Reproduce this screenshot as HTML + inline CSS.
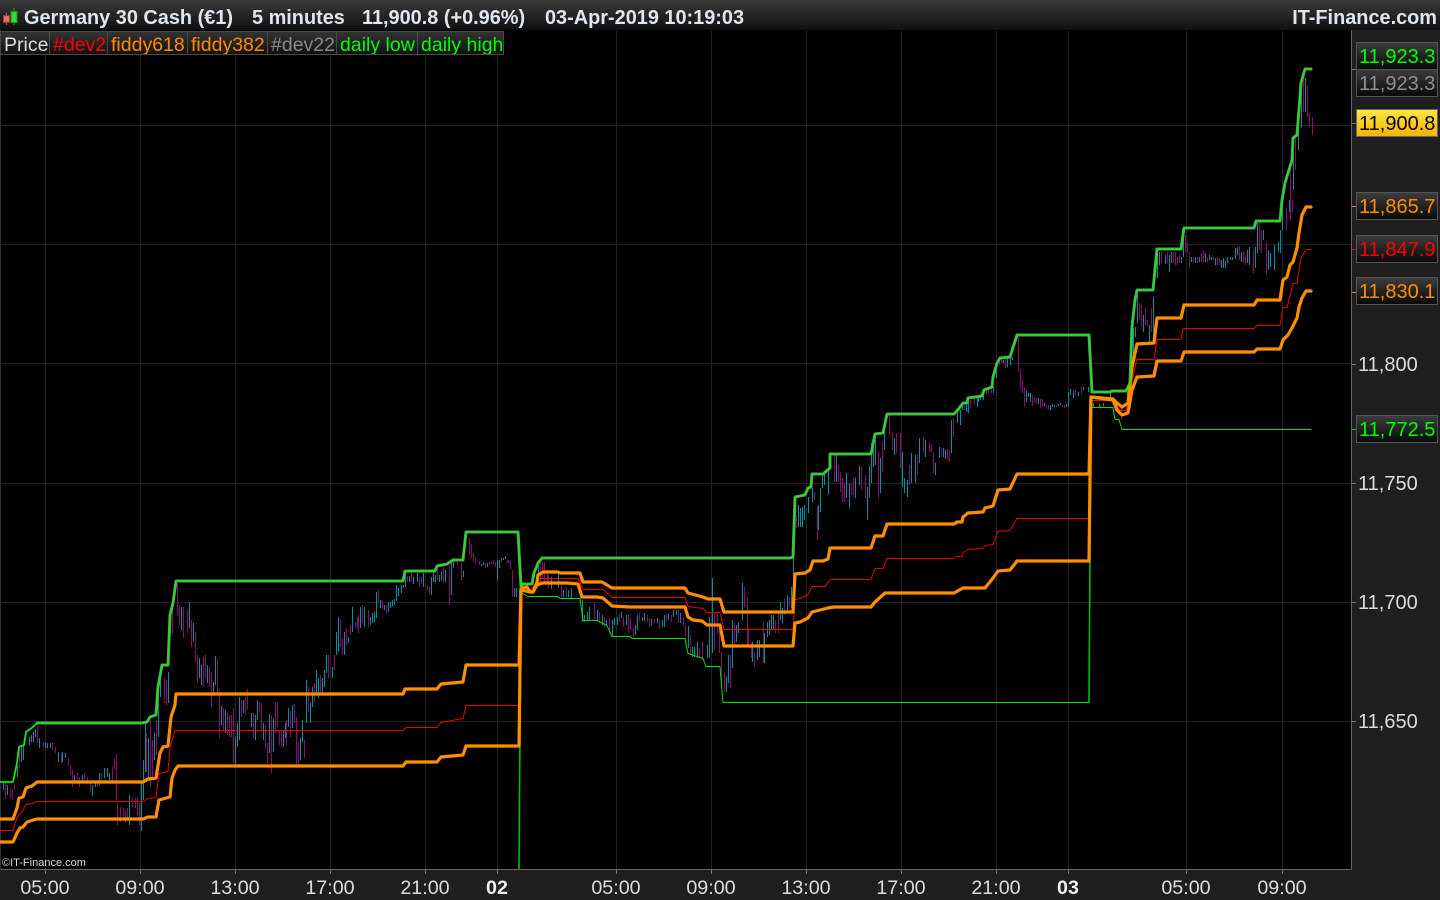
<!DOCTYPE html>
<html><head><meta charset="utf-8"><title>Germany 30 Cash</title>
<style>
html,body{margin:0;padding:0;background:#000;width:1440px;height:900px;overflow:hidden}
body{position:relative;font-family:"Liberation Sans",sans-serif}
.a{position:absolute;white-space:nowrap}
#hd{left:0;top:0;width:1440px;height:30px;background:linear-gradient(#3a3a3a,#101010);}
.h{top:6px;font:bold 19.9px/24px "Liberation Sans",sans-serif;color:#dfe6ee}
.c{top:31px;height:24px;box-sizing:border-box;border:1px solid #4a4a4a;border-left:0;background:linear-gradient(#333,#111);font-size:19.5px;line-height:27px;padding-left:3px;overflow:hidden}
.p{left:1356px;width:82px;height:28px;box-sizing:border-box;border:1.5px solid #555;background:linear-gradient(#3c3c3c,#0a0a0a);font-size:20px;line-height:29px;padding-left:2px}
.t{top:876px;width:70px;text-align:center;color:#dcdcdc;font-size:19.7px;line-height:24px}
.y{left:1358px;color:#dcdcdc;font-size:20px;line-height:26px}
svg{position:absolute;left:0;top:0}
</style></head><body>
<svg width="1440" height="900" viewBox="0 0 1440 900">
<rect x="1351" y="30" width="89" height="870" fill="#1f1f1f"/>
<rect x="0" y="869" width="1440" height="31" fill="#1f1f1f"/>
<rect x="1351" y="30" width="1" height="840" fill="#666"/>
<rect x="0" y="869" width="1352" height="1" fill="#666"/>
<rect x="0" y="30" width="1" height="840" fill="#333"/>
<path d="M0 125.5H1351M0 244.5H1351M0 363.5H1351M0 483.5H1351M0 602.5H1351M0 721.5H1351M45.5 31V869M140.5 31V869M235.5 31V869M330.5 31V869M425.5 31V869M616.5 31V869M711.5 31V869M806.5 31V869M901.5 31V869M996.5 31V869M1186.5 31V869M1282.5 31V869M497.5 31V869M1068.5 31V869" stroke="#222" stroke-width="1" fill="none"/>
<path d="M45.5 870V874M140.5 870V874M235.5 870V874M330.5 870V874M425.5 870V874M497.5 870V874M616.5 870V874M711.5 870V874M806.5 870V874M901.5 870V874M996.5 870V874M1068.5 870V874M1186.5 870V874M1282.5 870V874M1352 364.5H1356M1352 483.5H1356M1352 602.5H1356M1352 721.5H1356M1352 69.5H1356M1352 123.5H1356" stroke="#777" fill="none"/>
<path d="M1352 206.5H1356M1352 292.5H1356" stroke="#ff8c00"/><path d="M1352 249.5H1356" stroke="#e00"/><path d="M1352 429.5H1356" stroke="#0c0"/>
<g transform="translate(.5,0)" fill="none" stroke-width="1">
<path stroke="#0890a0" d="M3 783V790M7 785V795M17 765V777M21 747V762M23 745V760M29 737V745M31 735V742M33 732V742M35 729V737M39 738V748M45 742V748M47 743V748M50 743V748M58 752V762M62 752V762M65 753V758M74 775V782M82 775V782M92 785V796M95 783V787M99 773V785M104 768V778M107 768V777M109 773V780M129 795V825M141 783V831M143 760V800M145 723V772M148 738V778M154 733V760M158 697V737M160 673V697M168 672V703M170 610V633M181 607V630M189 602V628M193 623V641M199 658V678M201 665V685M207 665V683M213 682V695M215 656V685M221 706V725M225 710V733M235 737V765M237 723V747M239 697V740M243 700V713M251 713V727M255 715V740M257 700V720M263 723V740M269 714V753M273 719V752M283 730V747M285 723V738M288 708V727M292 705V728M300 738V760M302 720V742M306 680V723M310 703V723M312 687V707M316 670V693M318 678V698M322 678V693M324 670V687M326 655V673M332 667V678M336 632V655M338 617V652M344 632V655M348 637V643M352 607V632M360 607V628M364 607V627M370 617V625M372 613V623M374 612V622M376 592V618M380 600V608M384 605V610M388 602V612M390 602V608M392 600V606M394 599V605M396 585V601M398 588V596M401 585V593M403 585V588M405 575V587M409 576V582M413 577V584M417 573V582M423 573V587M431 577V595M433 572V582M435 575V582M439 575V582M441 572V580M445 570V582M451 563V595M453 562V568M463 571V577M465 533V543M481 564V566M483 562V565M487 563V567M497 560V580M499 560V568M503 558V560M505 556V559M514 588V597M516 588V597M501 558V561M538 565V583M551 577V589M558 573V588M563 590V597M568 590V597M571 588V598M582 600V622M584 615V622M587 612V620M589 607V620M597 610V620M602 615V625M606 620V625M612 620V637M614 618V625M617 617V625M621 612V618M626 615V625M635 625V635M637 615V630M642 617V621M644 613V621M651 619V625M657 618V623M662 620V627M664 615V627M668 614V620M673 610V617M676 610V615M680 613V623M688 626V648M692 647V657M694 647V657M697 642V658M707 645V658M709 617V658M712 578V653M726 677V692M728 655V683M732 620V668M736 625V642M738 622V633M742 583V620M752 642V662M757 640V660M759 640V657M764 633V663M767 622V637M769 620V635M771 615V630M773 615V630M780 602V620M782 608V623M787 595V613M791 587V608M793 557V583M793 560V580M798 505V527M800 508V527M802 507V527M804 505V520M808 497V513M812 488V502M818 505V530M820 488V512M822 475V488M824 474V485M828 470V495M836 455V482M846 473V498M849 483V508M855 478V498M859 466V485M867 487V520M869 466V498M871 443V483M873 437V467M875 440V465M880 458V493M884 432V450M894 438V455M902 452V487M904 478V493M907 480V497M911 453V483M915 455V483M919 438V463M925 440V457M935 463V475M939 447V458M943 448V457M945 450V459M951 420V453M957 413V423M960 410V425M962 405V410M966 403V412M968 398V413M977 397V407M978 396V402M980 395V400M983 390V400M993 387V393M996 363V378M1003 360V363M1007 358V367M1010 357V365M1012 357V360M1026 391V402M1028 393V397M1030 393V402M1038 398V404M1044 403V406M1050 405V410M1052 404V407M1054 405V407M1058 404V406M1060 403V405M1066 404V407M1068 392V407M1070 389V395M1073 391V398M1078 392V396M1083 387V390M1088 387V392M1093 403V407M1099 404V407M1103 403V406M1110 393V400M1127 392V407M1131 330V367M1133 328V360M1135 327V337M1137 295V323M1143 315V332M1149 325V342M1153 297V340M1157 250V278M1159 252V265M1165 255V264M1169 255V272M1171 252V263M1181 257V263M1183 228V257M1191 257V262M1195 257V263M1199 257V262M1205 253V262M1209 255V260M1211 257V260M1215 258V265M1221 260V268M1223 258V268M1225 261V268M1227 257V263M1230 257V260M1232 257V260M1235 248V259M1237 247V255M1241 252V262M1247 250V263M1249 247V265M1255 247V268M1257 223V253M1263 230V240M1268 250V270M1270 253V267M1274 245V270M1278 242V252M1280 230V253M1282 200V230M1289 200V212M1293 140V190M1298 130V150M1301 83V128M1305 78V112"/>
<path stroke="#8a0c70" d="M5 783V799M10 788V798M12 790V800M14 783V790M19 747V768M37 725V743M43 742V747M52 743V750M55 747V753M61 753V763M68 758V765M70 765V775M72 770V787M77 773V780M79 777V787M84 773V780M87 777V782M90 782V792M97 782V787M101 773V780M112 767V782M114 758V770M116 754V800M117 803V825M120 807V822M123 808V817M125 810V822M127 808V818M132 797V807M135 798V808M137 797V815M139 803V825M146 733V772M150 720V787M152 740V777M156 720V755M164 677V703M166 680V705M172 603V633M177 584V615M179 605V625M183 607V638M187 610V633M191 620V647M195 632V662M197 655V683M203 657V687M205 655V678M209 667V687M211 672V707M217 659V693M219 690V738M223 708V730M227 713V735M229 715V737M231 715V737M233 708V763M241 700V717M245 697V715M247 689V710M253 713V738M259 702V713M261 703V730M265 725V748M267 743V763M271 715V773M275 702V733M277 702V727M279 730V745M281 730V747M286 720V745M290 711V737M294 704V723M296 717V768M298 742V767M304 740V758M308 687V712M314 683V702M320 675V692M328 655V678M334 655V670M340 620V647M342 638V655M346 628V645M350 625V635M355 622V628M357 617V628M358 615V633M362 605V623M368 610V627M378 590V603M382 600V609M386 605V613M407 576V582M411 572V582M419 577V586M421 577V584M427 585V590M429 587V594M437 567V580M443 567V583M449 565V605M457 562V565M461 562V580M469 538V555M471 544V558M473 553V562M475 557V563M479 561V565M485 563V568M489 562V565M491 561V564M493 560V564M495 562V567M507 560V563M508 560V563M510 560V569M512 570V597M519 588V595M540 562V583M542 562V577M544 562V583M547 573V583M548 575V588M561 585V598M566 587V597M580 577V598M594 603V620M599 612V623M604 617V627M609 618V633M619 614V622M623 617V627M628 615V633M630 618V630M633 628V638M639 613V621M647 615V622M649 618V627M654 619V623M659 620V628M666 614V622M671 615V622M678 610V623M683 617V627M685 625V637M690 635V655M699 648V658M702 642V660M714 613V650M717 613V633M719 627V653M721 652V687M724 672V692M730 655V688M734 623V645M744 587V607M747 597V645M748 628V647M751 643V658M754 652V667M763 622V663M775 620V633M778 612V633M784 598V615M789 597V607M796 515V528M814 492V500M817 507V540M834 455V482M838 465V482M840 472V492M842 478V502M844 483V502M851 483V495M853 478V497M861 467V490M865 475V498M878 452V498M882 442V472M889 415V435M892 432V450M896 433V453M900 433V468M909 465V485M917 455V475M923 437V453M929 442V452M931 444V452M933 452V473M941 448V457M947 449V460M949 450V462M953 418V437M964 405V410M970 400V408M974 398V404M986 389V394M988 388V393M991 387V393M999 359V365M1001 359V363M1005 359V368M1018 337V372M1020 369V390M1022 379V393M1024 388V407M1032 395V406M1034 397V403M1036 398V403M1040 399V408M1042 399V407M1046 404V409M1048 405V410M1056 405V407M1062 405V407M1064 405V408M1075 390V396M1081 387V394M1121 407V420M1139 303V320M1141 305V327M1145 308V325M1147 320V326M1151 308V332M1161 252V263M1167 252V263M1173 252V263M1175 252V265M1177 257V265M1179 255V263M1185 235V252M1187 242V253M1189 252V268M1193 257V262M1197 257V263M1201 253V262M1203 250V262M1207 257V262M1213 257V260M1217 257V265M1219 258V265M1239 246V260M1243 252V263M1245 255V265M1253 250V273M1259 222V250M1261 230V253M1266 243V275M1286 208V230M1290 165V220M1292 200V212M1295 135V170M1303 80V112M1307 86V117M1309 113V127M1312 117V135"/>
</g>
<g fill="none" stroke-linejoin="round" stroke-linecap="round">
<!-- daily low -->
<g transform="translate(0,.5)">
<path stroke="#00e400" stroke-width="1" d="M521 592L528 596H558L560 598H580L583 620H597L607 625L612 636H630L632 638H685L688 653L703 658L706 666H720L723 702H1089M1091 407H1113L1115 419H1119L1122 429H1311"/>
<path stroke="#00c000" stroke-width="1.6" d="M519 868L521 592M1089 702L1091 407"/>
<!-- red -->
<path stroke="#f00000" stroke-width="1" d="M0 830H13L17 817L23 810L26 804L33 803L37 801H143L148 798L156 797L159 773L168 771L170 747L175 730H403L406 727H437L441 722L463 718L466 705H519L521 590L530 590L537 582L540 578H578L583 589H603L612 597H630H685L688 606L703 608L707 612H720L724 629H793L795 599L800 598L808 594L812 586H825L830 579H871L875 568H883L887 558H954L957 556H962L963 552L968 549L983 548L985 545L993 544L998 531L1010 530L1017 518H1089L1091 400H1113L1117 405L1120 410H1126L1132 380L1137 359H1154L1157 339H1181L1183 328H1254L1257 325H1280L1283 307H1287L1290 295L1293 283H1297L1301 257L1306 249H1311"/>
</g>
<!-- dev22 gray under -->
<path stroke="#808080" stroke-width="3" d="M37 723H142L147 722L150 717L156 715L158 687L162 665H168L170 615L173 603L176 581H403L405 571H435L437 566L447 564L453 560H463L466 532H518L521 587L523 584H532L534 573L538 563L542 558H790L793 557L795 497L805 495L808 488L811 487L812 474H823L830 468V454H871L875 434L883 433L887 414H954L957 411L963 403L967 403L968 398L982 396L984 390L992 387L993 377L997 363L1000 358L1010 357L1017 335H1089L1092 392H1110L1112 391H1126L1130 383L1132 327L1135 300L1137 290H1153L1157 249H1181L1184 228H1254L1256 221H1280L1282 200L1285 183L1292 160L1293 138L1297 135L1301 83L1305 69H1311"/>
<!-- orange -->
<path stroke="#ff8e00" stroke-width="3.2" d="M0 819H13L17 808L19 798L23 797L26 788L32 786L37 782H143L148 779L156 778L160 753L163 747L168 746L171 717L175 705L176 694H403L405 689H437L441 684L463 682L466 665H519L521 590L523 588L527 587L530 592H533L537 582L538 575L543 572H558L560 573H580L583 582H602L612 588H685L688 593L703 597L708 599H720L724 612H793L795 574L805 573L810 570L813 561H823L828 559L830 548H871L875 536H883L887 524H954L957 522H962L963 517L968 513L983 512L985 508L993 506L998 490L1010 489L1017 474H1089L1091 397L1113 399L1117 403L1122 407L1128 403L1132 367L1137 344L1154 343L1157 318H1181L1184 305H1254L1257 300H1280L1283 280L1287 277L1290 265L1293 262L1297 248L1299 233L1302 215L1306 207H1311"/>
<path stroke="#ff8e00" stroke-width="3.2" d="M0 842H13L17 833L20 828L23 827L27 822L33 820L37 819H143L148 817L156 817L159 800L170 797L172 778L175 770L178 766H403L406 762H437L441 757L463 755L466 746H519L521 590L530 592H533L537 585L542 583H567L578 584L582 597H597L603 598L612 606L630 607H685L688 617L693 620L702 621L707 625H720L724 646H793L795 623L800 622L808 618L812 612L828 608L834 607H871L875 602L885 593H954L963 588H985L993 578L998 571L1010 570L1017 561H1089L1091 397L1113 400L1117 410L1122 415L1128 413L1132 390L1137 377L1154 376L1157 361H1181L1184 352H1254L1257 349H1280L1283 340L1288 335L1292 328L1297 318L1299 307L1302 298L1306 291H1311"/>
<!-- daily high -->
<path stroke="#10ea10" stroke-width="1.8" d="M0 782H13L17 763L19 747L24 745L26 732L33 727L37 723H142L147 722L150 717L156 715L158 687L162 665H168L170 615L173 603L176 581H403L405 571H435L437 566L447 564L453 560H463L466 532H518L521 587L523 584H532L534 573L538 563L542 558H790L793 557L795 497L805 495L808 488L811 487L812 474H823L830 468V454H871L875 434L883 433L887 414H954L957 411L963 403L967 403L968 398L982 396L984 390L992 387L993 377L997 363L1000 358L1010 357L1017 335H1089L1092 392H1110L1112 391H1126L1130 383L1132 327L1135 300L1137 290H1153L1157 249H1181L1184 228H1254L1256 221H1280L1282 200L1285 183L1292 160L1293 138L1297 135L1301 83L1305 69H1311"/>
</g>
</svg>

<div class="a" id="hd"></div>
<svg width="20" height="30" viewBox="0 0 20 30" style="left:0;top:0">
<path d="M6.5 13V25" stroke="#c55" /><rect x="3.5" y="15.5" width="6" height="7" fill="#e86a6a" stroke="#a33"/>
<path d="M14 8V25" stroke="#2a2" /><rect x="11" y="11.5" width="6" height="11" fill="#33dd33" stroke="#191"/>
</svg>
<div class="a h" style="left:24px">Germany 30 Cash (€1)</div>
<div class="a h" style="left:252px">5 minutes</div>
<div class="a h" style="left:362px">11,900.8 (+0.96%)</div>
<div class="a h" style="left:545px">03-Apr-2019 10:19:03</div>
<div class="a h" style="right:3px">IT-Finance.com</div>

<div class="a c" style="left:0;width:50px;color:#dcdcdc;border-left:1px solid #4a4a4a">Price</div>
<div class="a c" style="left:50px;width:58px;color:#f00">#dev2</div>
<div class="a c" style="left:108px;width:80px;color:#ff8c00">fiddy618</div>
<div class="a c" style="left:188px;width:80px;color:#ff8c00">fiddy382</div>
<div class="a c" style="left:268px;width:69px;color:#8a8a8a">#dev22</div>
<div class="a c" style="left:337px;width:81px;color:#0f0">daily low</div>
<div class="a c" style="left:418px;width:86px;color:#0f0">daily high</div>

<div class="a p" style="top:42px;color:#0f0">11,923.3</div>
<div class="a p" style="top:69px;color:#8f8f8f">11,923.3</div>
<div class="a p" style="top:109px;color:#000;background:linear-gradient(#ffe640,#f5b400);border-color:#666">11,900.8</div>
<div class="a p" style="top:192px;color:#ff8c00">11,865.7</div>
<div class="a p" style="top:235px;color:#f00">11,847.9</div>
<div class="a p" style="top:277px;color:#ff8c00">11,830.1</div>
<div class="a p" style="top:415px;color:#0f0">11,772.5</div>

<div class="a y" style="top:352px">11,800</div>
<div class="a y" style="top:471px">11,750</div>
<div class="a y" style="top:590px">11,700</div>
<div class="a y" style="top:709px">11,650</div>

<div class="a t" style="left:10px">05:00</div>
<div class="a t" style="left:105px">09:00</div>
<div class="a t" style="left:200px">13:00</div>
<div class="a t" style="left:295px">17:00</div>
<div class="a t" style="left:390px">21:00</div>
<div class="a t" style="left:462px;font-weight:bold;color:#eee">02</div>
<div class="a t" style="left:581px">05:00</div>
<div class="a t" style="left:676px">09:00</div>
<div class="a t" style="left:771px">13:00</div>
<div class="a t" style="left:866px">17:00</div>
<div class="a t" style="left:961px">21:00</div>
<div class="a t" style="left:1033px;font-weight:bold;color:#eee">03</div>
<div class="a t" style="left:1151px">05:00</div>
<div class="a t" style="left:1247px">09:00</div>

<div class="a" style="left:2px;top:856px;color:#dcdcdc;font-size:11px;line-height:14px">©IT-Finance.com</div>
</body></html>
